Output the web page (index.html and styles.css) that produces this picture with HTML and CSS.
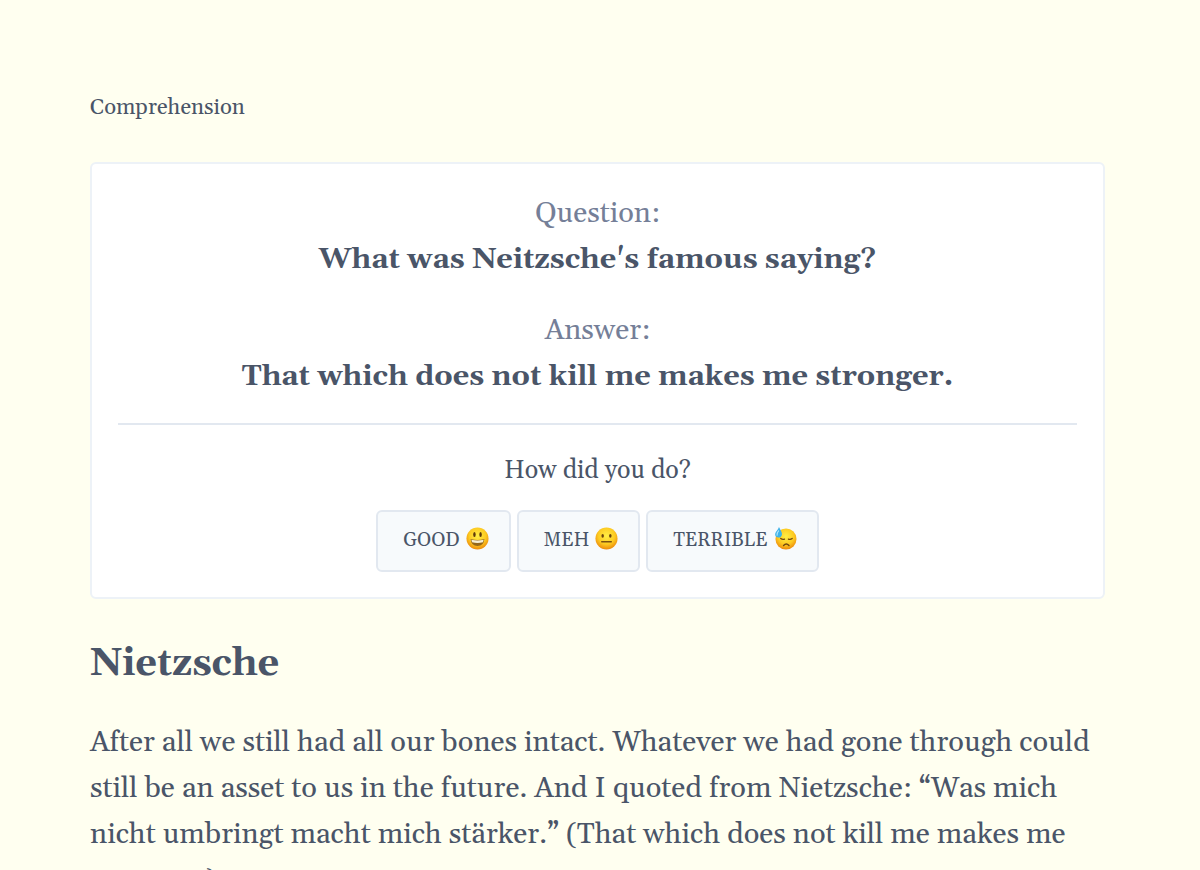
FILE: index.html
```
<!DOCTYPE html>
<html lang="en">
<head>
  <meta charset="utf-8">
  <title>Comprehension</title>
  <link rel="stylesheet" href="styles.css">
</head>
<body>

<main class="page">
  <p class="site-title">Comprehension</p>

  <section class="card">
    <p class="card-label">Question:</p>
    <p class="card-text">What was Neitzsche's famous saying?</p>
    <p class="card-label answer-label">Answer:</p>
    <p class="card-text">That which does not kill me makes me stronger.</p>
    <hr>
    <p class="prompt">How did you do?</p>
    <div class="ratings">
      <button type="button">GOOD
        <svg class="emoji" viewBox="0 0 24 24" aria-hidden="true">
          <defs>
            <radialGradient id="face" cx="50%" cy="38%" r="62%">
              <stop offset="0" stop-color="#ffee45"/>
              <stop offset="0.6" stop-color="#fdcb22"/>
              <stop offset="1" stop-color="#ec8a0c"/>
            </radialGradient>
          </defs>
          <circle cx="12" cy="12" r="11.5" fill="url(#face)"/>
          <ellipse cx="8.8" cy="7.8" rx="1.3" ry="2.7" fill="#5f3a0c"/>
          <ellipse cx="15.2" cy="7.8" rx="1.3" ry="2.7" fill="#5f3a0c"/>
          <path d="M4.8 12.5Q12 14.5 19.2 12.5Q18.6 19.8 12 19.8Q5.4 19.8 4.8 12.5Z" fill="#94661a"/>
          <path d="M5.6 13.3Q12 15 18.4 13.3L17.7 15.9Q12 17.4 6.3 15.9Z" fill="#f7eed2"/>
        </svg>
      </button>
      <button type="button">MEH
        <svg class="emoji" viewBox="0 0 24 24" aria-hidden="true">
          <circle cx="12" cy="12" r="11.5" fill="url(#face)"/>
          <ellipse cx="8" cy="9.2" rx="1.3" ry="2" fill="#6b430d"/>
          <ellipse cx="16" cy="9.2" rx="1.3" ry="2" fill="#6b430d"/>
          <path d="M7 15.3H17" stroke="#7b5010" stroke-width="1.5" stroke-linecap="round"/>
        </svg>
      </button>
      <button type="button">TERRIBLE
        <svg class="emoji" viewBox="0 0 24 24" aria-hidden="true">
          <circle cx="12.5" cy="12.5" r="11" fill="url(#face)"/>
          <path d="M7 12Q9 13.6 11 12.6M15 12.6Q17 13.6 19 12" fill="none" stroke="#70470e" stroke-width="1.3" stroke-linecap="round"/>
          <path d="M10 19.2Q12.8 16.4 15.6 19.2" fill="none" stroke="#70470e" stroke-width="1.5" stroke-linecap="round"/>
          <path d="M5.2 0C6.6 3 8.6 5.2 8.3 7.8C8 10.2 6.3 11.4 4.3 11C1.9 10.6.8 8.8 1.3 6.7C1.8 4.5 4.5 2.8 5.2 0Z" fill="#3fb2e8"/>
          <path d="M4.8 4C3.2 5.9 2.6 6.9 3.2 8.6" fill="none" stroke="#b2e7fb" stroke-width="1.2" stroke-linecap="round"/>
        </svg>
      </button>
    </div>
  </section>

  <article>
    <h1>Nietzsche</h1>
    <p>After all we still had all our bones intact. Whatever we had gone through could still be an asset to us in the future. And I quoted from Nietzsche: “Was mich nicht umbringt macht mich stärker.” (That which does not kill me makes me stronger.)</p>
  </article>
</main>

</body>
</html>
```

FILE: styles.css
```
* {
  box-sizing: border-box;
}

body {
  margin: 0;
  background-color: #fffff0;
  color: #4a5568;
  font-family: Gelasio, Georgia, "Liberation Serif", serif;
  font-size: 29px;
  line-height: 46px;
}

p {
  margin: 0;
}

.page {
  padding: 85px 95px 0 90px;
}

.site-title {
  font-size: 22px;
}

.card {
  margin-top: 31px;
  padding: 27px 26px 25px;
  background-color: #fff;
  border: 2px solid #edf2f7;
  border-radius: 6px;
  text-align: center;
}

.card-label {
  color: #757f98;
}

.card-text {
  font-weight: bold;
}

.answer-label {
  margin-top: 25px;
}

hr {
  height: 2px;
  margin: 23px 0 25px;
  border: none;
  background-color: #e2e8f0;
}

.prompt {
  font-size: 25px;
  line-height: 42px;
}

.ratings {
  display: flex;
  justify-content: center;
  gap: 6px;
  margin-top: 18px;
}

button {
  display: flex;
  align-items: center;
  gap: 6px;
  height: 62px;
  padding: 0 20px 2px 25px;
  background-color: #f7fafc;
  border: 2px solid #e2e8f0;
  border-radius: 6px;
  color: #4a5568;
  font-family: inherit;
  font-size: 19px;
  cursor: pointer;
}

.emoji {
  width: 23px;
  height: 23px;
  margin-bottom: 4px;
}

h1 {
  margin: 34px 0 25px;
  font-size: 38px;
  line-height: 62px;
}
```
